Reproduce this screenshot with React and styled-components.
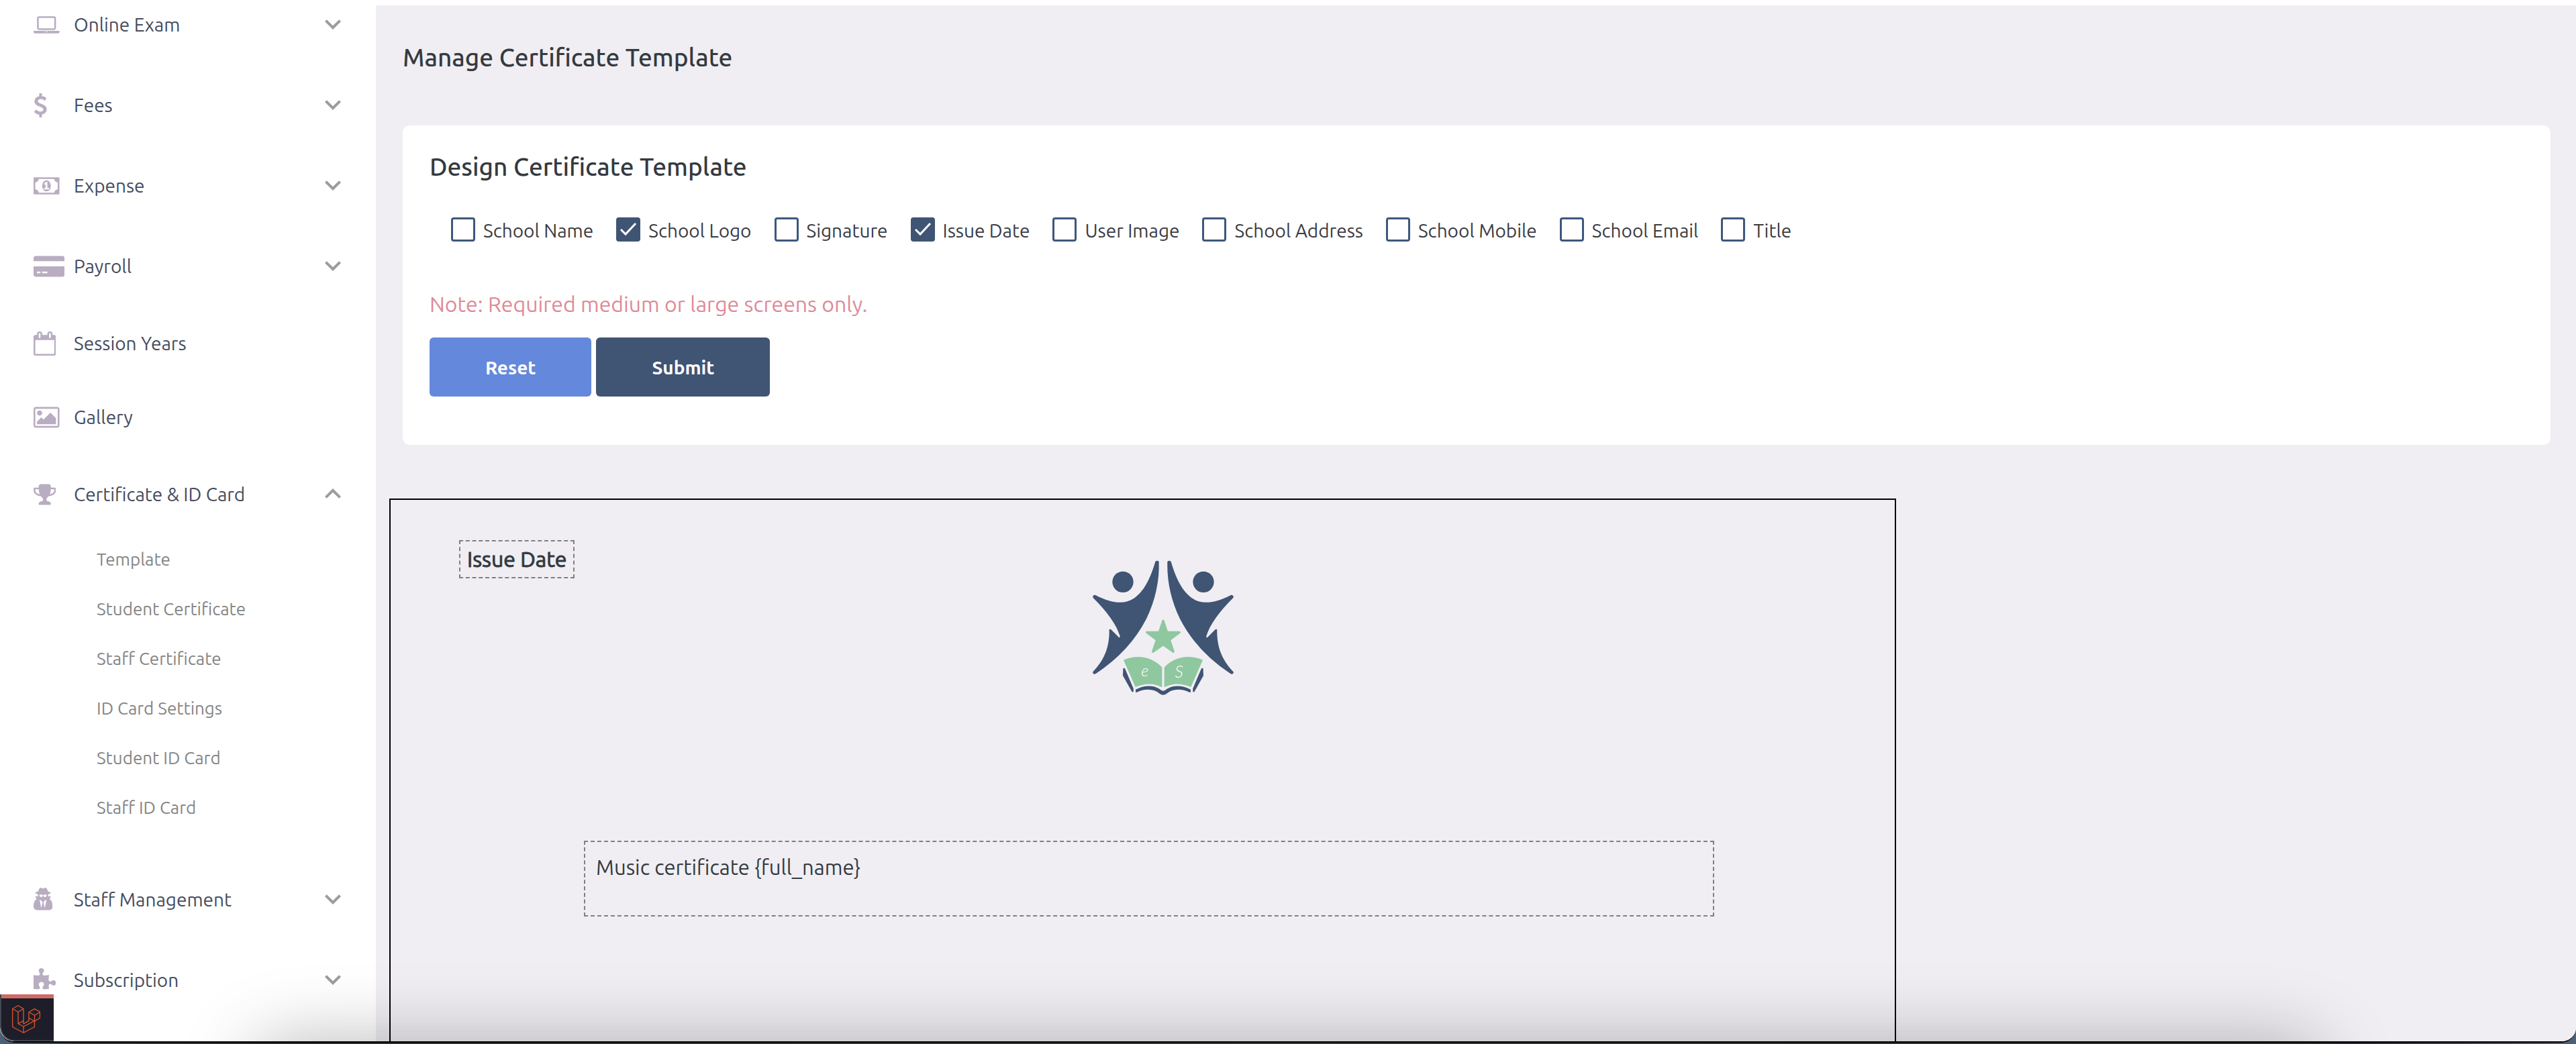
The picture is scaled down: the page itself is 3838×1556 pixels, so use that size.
import React, { useState } from "react";
import styled, { createGlobalStyle, css } from "styled-components";

const GlobalStyle = createGlobalStyle`
  *, *::before, *::after { box-sizing: border-box; }
  body { margin: 0; background: #2b3440; }
  body, button, input, a {
    font-family: Ubuntu, "Noto Sans", sans-serif;
    font-size: 28px;
  }
`;

/* ---------- window frame ---------- */

const Desktop = styled.div`
  height: 100vh;
  padding-bottom: 2px;
  overflow: hidden;
  background: linear-gradient(90deg, #4c6078 0, #33414f 120px, #2c302f 400px, #3a3b39 50%, #2c302f 3440px, #232c38 3500px, #4c6078 100%);
`;

const Window = styled.div`
  position: relative;
  display: flex;
  height: 100%;
  overflow: hidden;
  background: #ffffff;
  border-bottom: 2px solid #000000;
  border-radius: 0 0 22px 22px;
`;

const DockShadow = styled.div`
  position: absolute;
  left: 380px;
  right: 380px;
  top: 100%;
  height: 120px;
  border-radius: 40px;
  box-shadow: 0 0 110px rgba(0, 0, 0, 0.28);
  pointer-events: none;
`;

/* ---------- sidebar ---------- */

const Sidebar = styled.nav`
  flex: 0 0 560px;
  overflow: hidden;
  background: #ffffff;
`;

const NavList = styled.ul`
  margin: 0;
  padding: 0;
  list-style: none;
`;

const NavItem = styled.li`
  margin-bottom: 48px;
`;

const NavLink = styled.a`
  display: flex;
  align-items: center;
  height: ${(p) => (p.$plain ? "62px" : "72px")};
  padding: 0 40px 0 50px;
  color: #454c5e;
  text-decoration: none;
`;

const NavIcon = styled.span`
  display: flex;
  flex: 0 0 60px;
  padding-top: 2px;
  color: #b9adc1;

  svg { display: block; height: 36px; fill: currentColor; }
`;

const NavLabel = styled.span`
  flex: 1;
`;

const Arrow = styled.svg`
  width: 48px;
  height: 48px;
  fill: #9c9c9c;
  ${(p) => p.$open && css`transform: rotate(180deg);`}
`;

const SubList = styled.ul`
  margin: 0;
  padding: 24px 0 16px 144px;
  list-style: none;
`;

const SubLink = styled.a`
  display: flex;
  align-items: center;
  height: 74px;
  color: #858585;
  font-size: 26px;
  text-decoration: none;
`;

/* ---------- content ---------- */

const Content = styled.main`
  flex: 1;
  min-width: 0;
  overflow: hidden;
  border-top: 8px solid #ffffff;
  background: #f0eef3;
`;

const PageTitle = styled.h3`
  margin: 0;
  padding: 56px 40px 79px;
  color: #343a40;
  font-size: 37px;
  font-weight: 500;
  line-height: 44px;
`;

const Card = styled.section`
  margin: 0 38px 80px 40px;
  padding: 40px 40px 72px;
  background: #ffffff;
  border-radius: 10px;
`;

const CardTitle = styled.h4`
  margin: 0 0 53px;
  color: #343a40;
  font-size: 37px;
  font-weight: 500;
  line-height: 44px;
`;

const Options = styled.div`
  display: flex;
  flex-wrap: wrap;
  gap: 24px 34px;
  padding: 0 32px;
`;

const Option = styled.label`
  display: flex;
  align-items: flex-start;
  gap: 12px;
  color: #3a3c43;
  line-height: 36px;

  span { padding-top: 2px; }
`;

const Check = styled.input`
  appearance: none;
  width: 36px;
  height: 36px;
  margin: 0;
  border: 3px solid #3e577c;
  border-radius: 4px;
  background: #ffffff center / 28px 28px no-repeat;

  &:checked {
    background-color: #405474;
    background-image: url("data:image/svg+xml,%3Csvg xmlns='http://www.w3.org/2000/svg' viewBox='0 0 28 28'%3E%3Cpath d='M3 14l7 7L25 5' fill='none' stroke='white' stroke-width='3'/%3E%3C/svg%3E");
    border-color: #405474;
  }
`;

const Note = styled.p`
  margin: 69px 0 28px;
  color: #dd8b98;
  font-size: 32px;
  line-height: 44px;
`;

const Actions = styled.div`
  display: flex;
  gap: 7px;
`;

const Button = styled.button`
  height: 88px;
  padding: 0 83px;
  border: 0;
  border-radius: 6px;
  background: ${(p) => (p.$primary ? "#405474" : "#6488db")};
  color: #ffffff;
  font-weight: 700;
`;

/* ---------- certificate canvas ---------- */

const Paper = styled.section`
  position: relative;
  width: 2245px;
  margin-left: 20px;
  aspect-ratio: 297 / 210;
  border: 2px solid #000000;
`;

const DateField = styled.div`
  position: absolute;
  left: 102px;
  top: 60px;
  padding: 8px 10px;
  border: 2px dashed #808080;
  color: #343a40;
  font-size: 32px;
  -webkit-text-stroke: 1px #343a40;
  line-height: 37px;
`;

const BodyField = styled.div`
  position: absolute;
  left: 288px;
  top: 508px;
  width: 1684px;
  height: 113px;
  padding: 16px;
  border: 2px dashed #808080;
  color: #343a40;
  font-size: 31px;
  line-height: 44px;
`;

const Logo = styled.svg`
  position: absolute;
  left: 1044px;
  top: 88px;
  width: 214px;
  height: 204px;
`;

/* ---------- debug bar ---------- */

const DebugBar = styled.button`
  position: absolute;
  left: 0;
  bottom: 0;
  display: flex;
  align-items: center;
  width: 80px;
  height: 70px;
  padding: 0 0 0 16px;
  border: solid #43464f;
  border-width: 0 0 2px 2px;
  border-radius: 0 0 0 22px;
  background: #1d1e29;
  box-shadow: inset 0 6px 0 #d06a66;

  svg { width: 42px; height: 42px; margin-top: 6px; }
`;

/* ---------- icons ---------- */

const icons = {
  laptop: [1920, "M416 1280q-66 0-113-47t-47-113v-704q0-66 47-113t113-47h1088q66 0 113 47t47 113v704q0 66-47 113t-113 47h-1088zm-32-864v704q0 13 9.5 22.5t22.5 9.5h1088q13 0 22.5-9.5t9.5-22.5v-704q0-13-9.5-22.5t-22.5-9.5h-1088q-13 0-22.5 9.5t-9.5 22.5zm1376 928h160v96q0 40-47 68t-113 28h-1600q-66 0-113-28t-47-68v-96h1760zm-720 96q16 0 16-16t-16-16h-160q-16 0-16 16t16 16h160z"],
  dollar: [1024, "M978 1185q0 153-99.5 263.5t-258.5 136.5v175q0 14-9 23t-23 9h-135q-13 0-22.5-9.5t-9.5-22.5v-175q-66-9-127.5-31t-101.5-44.5-74-48-46.5-37.5-17.5-18q-17-21-2-41l103-135q7-10 23-12 15-2 24 9l2 2q113 99 243 125 37 8 74 8 81 0 142.5-43t61.5-122q0-28-15-53t-33.5-42-58.5-37.5-66-32-80-32.5q-39-16-61.5-25t-61.5-26.5-62.5-31-56.5-35.5-53.5-42.5-43.5-49-35.5-58-21-66.5-8.5-78q0-138 98-242t255-134v-180q0-13 9.5-22.5t22.5-9.5h135q14 0 23 9t9 23v176q57 6 110.5 23t87 33.5 63.5 37.5 39 29 15 14q17 18 5 38l-81 146q-8 15-23 16-14 3-27-7-3-3-14.5-12t-39-26.5-58.5-32-74.5-26-85.5-11.5q-95 0-155 43t-60 111q0 26 8.5 48t29.5 41.5 39.5 33 56 31 60.5 27 70 27.5q53 20 81 31.5t76 35 75.5 42.5 62 50 53 63.5 31.5 76.5 13 94z"],
  money: [1920, "M768 1152h384v-96h-128v-448h-114l-148 137 77 80q42-37 55-57h2v288h-128v96zm512-256q0 70-21 142t-59.5 134-101.5 101-138 39-138-39-101.5-101-59.5-134-21-142 21-142 59.5-134 101.5-101 138-39 138 39 101.5 101 59.5 134 21 142zm512 256v-512q-106 0-181-75t-75-181h-1152q0 106-75 181t-181 75v512q106 0 181 75t75 181h1152q0-106 75-181t181-75zm128-832v1152q0 26-19 45t-45 19h-1792q-26 0-45-19t-19-45v-1152q0-26 19-45t45-19h1792q26 0 45 19t19 45z"],
  card: [2304, "M0 1504v-608h2304v608q0 66-47 113t-113 47h-1984q-66 0-113-47t-47-113zm640-224v128h384v-128h-384zm-384 0v128h256v-128h-256zm1888-1152q66 0 113 47t47 113v224h-2304v-224q0-66 47-113t113-47h1984z"],
  calendar: [1664, "M128 1664h1408v-1024h-1408v1024zm384-1216v-288q0-14-9-23t-23-9h-64q-14 0-23 9t-9 23v288q0 14 9 23t23 9h64q14 0 23-9t9-23zm768 0v-288q0-14-9-23t-23-9h-64q-14 0-23 9t-9 23v288q0 14 9 23t23 9h64q14 0 23-9t9-23zm384-64v1280q0 52-38 90t-90 38h-1408q-52 0-90-38t-38-90v-1280q0-52 38-90t90-38h128v-96q0-66 47-113t113-47h64q66 0 113 47t47 113v96h384v-96q0-66 47-113t113-47h64q66 0 113 47t47 113v96h128q52 0 90 38t38 90z"],
  picture: [1920, "M640 576q0 80-56 136t-136 56-136-56-56-136 56-136 136-56 136 56 56 136zm1024 384v448h-1408v-192l320-320 160 160 512-512zm96-704h-1600q-13 0-22.5 9.5t-9.5 22.5v1216q0 13 9.5 22.5t22.5 9.5h1600q13 0 22.5-9.5t9.5-22.5v-1216q0-13-9.5-22.5t-22.5-9.5zm160 32v1216q0 66-47 113t-113 47h-1600q-66 0-113-47t-47-113v-1216q0-66 47-113t113-47h1600q66 0 113 47t47 113z"],
  trophy: [1664, "M458 883q-74-162-74-371h-256v96q0 78 94.5 162t235.5 113zm1078-275v-96h-256q0 209-74 371 141-29 235.5-113t94.5-162zm128-128v128q0 71-41.5 143t-112 130-173 97.5-215.5 44.5q-42 54-95 95-38 34-52.5 72.5t-14.5 89.5q0 54 30.5 91t97.5 37q75 0 133.5 45.5t58.500 114.500v64q0 14-9 23t-23 9h-832q-14 0-23-9t-9-23v-64q0-69 58.5-114.5t133.5-45.5q67 0 97.5-37t30.5-91q0-51-14.5-89.5t-52.5-72.5q-53-41-95-95-113-5-215.5-44.5t-173-97.5-112-130-41.5-143v-128q0-40 28-68t68-28h288v-96q0-66 47-113t113-47h576q66 0 113 47t47 113v96h288q40 0 68 28t28 68z"],
  agent: [1408, "M576 1536l96-448-96-128-128-64zm256 0l128-640-128 64-96 128zm160-1010q-2-4-4-6-10-8-96-8-70 0-167 19-7 2-21 2t-21-2q-97-19-167-19-86 0-96 8-2 2-4 6 2 18 4 27 2 3 7.5 6.5t7.5 10.5q2 4 7.5 20.5t7 20.5 7.5 17 8.5 17 9 14 12 13.5 14 9.5 17.5 8 20.5 4 24.5 2q36 0 59-12.5t32.5-30 14.5-34.5 11.5-29.5 17.5-12.5h12q11 0 17.5 12.5t11.5 29.5 14.5 34.5 32.5 30 59 12.5q13 0 24.5-2t20.5-4 17.5-8 14-9.5 12-13.5 9-14 8.5-17 7.5-17 7-20.5 7.5-20.5q2-7 7.5-10.5t7.5-6.5q2-9 4-27zm416 879q0 121-73 190t-194 69h-874q-121 0-194-69t-73-190q0-61 4.5-118t19-125.5 37.5-123.5 63.5-103.5 93.5-74.5l-90-220h214q-22-64-22-128 0-12 2-32-194-40-194-96 0-57 210-99 17-62 51.5-134t70.5-114q32-37 76-37 30 0 84 31t84 31 84-31 84-31q44 0 76 37 36 42 70.5 114t51.5 134q210 42 210 99 0 56-194 96 7 81-20 160h214l-82 225q63 33 107.5 96.5t65.5 143.5 29 151.5 8 148.5z"],
  puzzle: [1664, "M1664 1098q0 81-44.5 135t-123.5 54q-41 0-77.5-17.5t-59-38-56.5-38-71-17.5q-110 0-110 124 0 39 16 115t15 115v5q-22 0-33 1-34 3-97.5 11.5t-115.5 13.5-98 5q-61 0-103-26.5t-42-83.5q0-37 17.5-71t38-56.5 38-59 17.5-77.5q0-79-54-123.5t-135-44.5q-84 0-143 45.5t-59 127.5q0 43 15 83t33.5 64.5 33.5 53 15 50.5q0 45-46 89-37 35-117 35-95 0-245-24-9-2-27.5-4t-27.5-4l-13-2q-1 0-3-1-2 0-2-1v-1024q2 1 17.5 3.5t34 5 21.5 3.5q150 24 245 24 80 0 117-35 46-44 46-89 0-22-15-50.5t-33.5-53-33.5-64.5-15-83q0-82 59-127.5t144-45.5q80 0 134 44.5t54 123.5q0 41-17.5 77.5t-38 59-38 56.5-17.5 71q0 57 42 83.5t103 26.5q64 0 180-15t163-17v2q-1 2-3.5 17.5t-5 34-3.5 21.5q-24 150-24 245 0 80 35 117 44 46 89 46 22 0 50.5-15t53-33.5 64.5-33.5 83-15q82 0 127.5 59t45.5 143z"],
};

function Icon({ name }) {
  const [width, path] = icons[name];
  return (
    <svg viewBox={`0 0 ${width} 1792`} aria-hidden="true">
      <path d={path} />
    </svg>
  );
}

function Chevron({ open }) {
  return (
    <Arrow viewBox="0 0 24 24" $open={open} aria-hidden="true">
      <path d="M7.41 8.58 12 13.17l4.59-4.59L18 10l-6 6-6-6z" />
    </Arrow>
  );
}

function SchoolLogo() {
  return (
    <Logo viewBox="138 97 642 612" role="img" aria-label="School logo">
      <defs>
        <g id="figure">
          <circle cx="279" cy="200" r="47" />
          <path d="M424 109Q432 101 440 109Q444 240 384 365Q310 510 157 611Q146 615 144 603C190 555 220 500 218 413Q221 409 226 413L262 449Q267 449 266 443C252 392 206 330 145 270Q143 258 155 258C235 300 290 299 326 275C375 243 403 180 424 109Z" />
          <path d="M280 587Q285 582 289 589L326 676V692H320L279 619Z" />
          <path d="M336 681C372 661 415 660 442 678Q451 686 459 687V705C447 705 441 696 430 690C402 677 370 679 342 693H336Z" />
        </g>
        <path id="page" d="M282 549C345 522 410 535 454 582V671C415 651 378 652 335 670Z" />
      </defs>
      <g fill="#405474">
        <use href="#figure" />
        <use href="#figure" transform="translate(918 0) scale(-1 1)" />
      </g>
      <g fill="#8fc79f">
        <use href="#page" />
        <use href="#page" transform="translate(918 0) scale(-1 1)" />
        <path
          d="M459 374 476 425H532L487 459 505 512 459 480 413 512 431 459 386 425H442Z"
          stroke="#8fc79f"
          strokeWidth="10"
          strokeLinejoin="round"
        />
      </g>
      <g fill="#ffffff" fontFamily="Lato, sans-serif" fontStyle="italic" fontWeight="300" textAnchor="middle">
        <text x="377" y="621" fontSize="70">e</text>
        <text x="530" y="627" fontSize="74">S</text>
      </g>
    </Logo>
  );
}

function LaravelMark() {
  return (
    <svg viewBox="0 0 42 42" fill="none" stroke="#e0552f" strokeWidth="1.3" strokeLinejoin="round" aria-hidden="true">
      <path d="M.7 5.5 9 .8l8 4.700v22.500l8-4.600V10.500l8.500-4.900L41.500 10v9.200L33.500 24v8.500L17 41.200.7 32.500z" />
      <path d="M.7 5.500 9 10.200l8-4.700M9 10.200v17.500L17 32l16.500-8.500M17 32v9.200M9 27.700l8-4.300M25 10.500l8.500 4.700 8-4.700M33.500 15.200V24L25 19.200" />
    </svg>
  );
}

/* ---------- data ---------- */

const menu = [
  { icon: "laptop", label: "Online Exam", group: true },
  { icon: "dollar", label: "Fees", group: true },
  { icon: "money", label: "Expense", group: true },
  { icon: "card", label: "Payroll", group: true },
  { icon: "calendar", label: "Session Years" },
  { icon: "picture", label: "Gallery" },
  {
    icon: "trophy",
    label: "Certificate & ID Card",
    group: true,
    children: ["Template", "Student Certificate", "Staff Certificate", "ID Card Settings", "Student ID Card", "Staff ID Card"],
  },
  { icon: "agent", label: "Staff Management", group: true },
  { icon: "puzzle", label: "Subscription", group: true },
];

const fields = [
  "School Name",
  "School Logo",
  "Signature",
  "Issue Date",
  "User Image",
  "School Address",
  "School Mobile",
  "School Email",
  "Title",
];

export default function App() {
  const [shown, setShown] = useState(["School Logo", "Issue Date"]);
  const toggle = (name) =>
    setShown((list) => (list.includes(name) ? list.filter((n) => n !== name) : [...list, name]));

  return (
    <>
      <GlobalStyle />
      <Desktop>
        <Window>
          <Sidebar aria-label="Main menu">
            <NavList>
              {menu.map((item) => (
                <NavItem key={item.label}>
                  <NavLink href="#" $plain={!item.group}>
                    <NavIcon><Icon name={item.icon} /></NavIcon>
                    <NavLabel>{item.label}</NavLabel>
                    {item.group && <Chevron open={Boolean(item.children)} />}
                  </NavLink>
                  {item.children && (
                    <SubList>
                      {item.children.map((child) => (
                        <li key={child}><SubLink href="#">{child}</SubLink></li>
                      ))}
                    </SubList>
                  )}
                </NavItem>
              ))}
            </NavList>
          </Sidebar>

          <Content>
            <PageTitle>Manage Certificate Template</PageTitle>
            <Card>
              <CardTitle>Design Certificate Template</CardTitle>
              <Options>
                {fields.map((name) => (
                  <Option key={name}>
                    <Check type="checkbox" checked={shown.includes(name)} onChange={() => toggle(name)} />
                    <span>{name}</span>
                  </Option>
                ))}
              </Options>
              <Note>Note: Required medium or large screens only.</Note>
              <Actions>
                <Button type="button" onClick={() => setShown([])}>Reset</Button>
                <Button type="button" $primary>Submit</Button>
              </Actions>
            </Card>
            <Paper>
              {shown.includes("Issue Date") && <DateField>Issue Date</DateField>}
              {shown.includes("School Logo") && <SchoolLogo />}
              <BodyField>Music certificate {"{full_name}"}</BodyField>
            </Paper>
          </Content>

          <DockShadow />
          <DebugBar type="button" aria-label="Open debug bar"><LaravelMark /></DebugBar>
        </Window>
      </Desktop>
    </>
  );
}
